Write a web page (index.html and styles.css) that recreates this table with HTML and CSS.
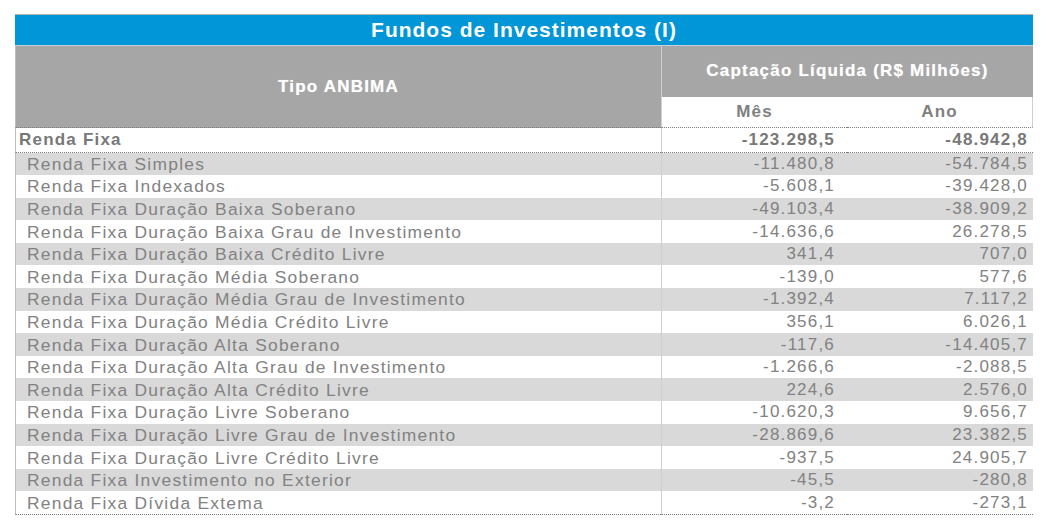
FILE: index.html
```html
<!DOCTYPE html>
<html lang="pt-BR">
<head>
<meta charset="utf-8">
<title>Fundos de Investimentos (I)</title>
<link rel="stylesheet" href="styles.css">
</head>
<body>
<table class="fundos">
  <colgroup>
    <col class="c-tipo">
    <col class="c-val">
    <col class="c-val">
  </colgroup>
  <thead>
    <tr class="r-title"><th colspan="3">Fundos de Investimentos (I)</th></tr>
    <tr class="r-h1">
      <th rowspan="2" class="h-tipo">Tipo ANBIMA</th>
      <th colspan="2" class="h-capt">Captação Líquida (R$ Milhões)</th>
    </tr>
    <tr class="r-h2">
      <th class="h-mes">Mês</th>
      <th class="h-ano">Ano</th>
    </tr>
  </thead>
  <tbody>
    <tr class="r-total"><td class="nome">Renda Fixa</td><td class="mes">-123.298,5</td><td class="ano">-48.942,8</td></tr>
    <tr class="r-item alt"><td class="nome">Renda Fixa Simples</td><td class="mes">-11.480,8</td><td class="ano">-54.784,5</td></tr>
    <tr class="r-item"><td class="nome">Renda Fixa Indexados</td><td class="mes">-5.608,1</td><td class="ano">-39.428,0</td></tr>
    <tr class="r-item alt"><td class="nome">Renda Fixa Duração Baixa Soberano</td><td class="mes">-49.103,4</td><td class="ano">-38.909,2</td></tr>
    <tr class="r-item"><td class="nome">Renda Fixa Duração Baixa Grau de Investimento</td><td class="mes">-14.636,6</td><td class="ano">26.278,5</td></tr>
    <tr class="r-item alt"><td class="nome">Renda Fixa Duração Baixa Crédito Livre</td><td class="mes">341,4</td><td class="ano">707,0</td></tr>
    <tr class="r-item"><td class="nome">Renda Fixa Duração Média Soberano</td><td class="mes">-139,0</td><td class="ano">577,6</td></tr>
    <tr class="r-item alt"><td class="nome">Renda Fixa Duração Média Grau de Investimento</td><td class="mes">-1.392,4</td><td class="ano">7.117,2</td></tr>
    <tr class="r-item"><td class="nome">Renda Fixa Duração Média Crédito Livre</td><td class="mes">356,1</td><td class="ano">6.026,1</td></tr>
    <tr class="r-item alt"><td class="nome">Renda Fixa Duração Alta Soberano</td><td class="mes">-117,6</td><td class="ano">-14.405,7</td></tr>
    <tr class="r-item"><td class="nome">Renda Fixa Duração Alta Grau de Investimento</td><td class="mes">-1.266,6</td><td class="ano">-2.088,5</td></tr>
    <tr class="r-item alt"><td class="nome">Renda Fixa Duração Alta Crédito Livre</td><td class="mes">224,6</td><td class="ano">2.576,0</td></tr>
    <tr class="r-item"><td class="nome">Renda Fixa Duração Livre Soberano</td><td class="mes">-10.620,3</td><td class="ano">9.656,7</td></tr>
    <tr class="r-item alt"><td class="nome">Renda Fixa Duração Livre Grau de Investimento</td><td class="mes">-28.869,6</td><td class="ano">23.382,5</td></tr>
    <tr class="r-item"><td class="nome">Renda Fixa Duração Livre Crédito Livre</td><td class="mes">-937,5</td><td class="ano">24.905,7</td></tr>
    <tr class="r-item alt"><td class="nome">Renda Fixa Investimento no Exterior</td><td class="mes">-45,5</td><td class="ano">-280,8</td></tr>
    <tr class="r-item last"><td class="nome">Renda Fixa Dívida Extema</td><td class="mes">-3,2</td><td class="ano">-273,1</td></tr>
  </tbody>
</table>
</body>
</html>
```

FILE: styles.css
```css
html, body {
  margin: 0;
  padding: 0;
  background: #ffffff;
}

body {
  padding: 14px 0 0 15px;
  font-family: "Liberation Sans", Arial, sans-serif;
  font-size: 17px;
  letter-spacing: 1.2px;
  color: #808080;
}

.fundos {
  border-collapse: separate;
  border-spacing: 0;
  table-layout: fixed;
  width: 1018px;
}

.c-tipo { width: 646px; }
.c-val { width: 186px; }

.fundos th,
.fundos td {
  padding: 0;
  white-space: nowrap;
  line-height: 20px;
}

/* Title bar */
.r-title th {
  height: 30px;
  background: #0096d8;
  color: #ffffff;
  font-size: 21px;
  letter-spacing: 1px;
  font-weight: bold;
  text-align: center;
  border-top: 1px solid #b4b4b4;
  border-bottom: 1px solid #c4cfd6;
}

/* Header */
.h-tipo {
  background: #a6a6a6;
  color: #ffffff;
  font-weight: bold;
  text-align: center;
  border-left: 1px solid #bdbdbd;
  border-bottom: 1px dotted #7a7a7a;
  text-shadow: 0 0 1px rgba(255,255,255,0.6);
}

.r-h1 th.h-capt {
  height: 50px;
  background: #a6a6a6;
  color: #ffffff;
  font-weight: bold;
  text-align: center;
  border-left: 1px solid #cfcfcf;
  padding-bottom: 1px;
  text-shadow: 0 0 1px rgba(255,255,255,0.6);
}

.r-h2 th {
  height: 30px;
  background: #ffffff;
  color: #808080;
  font-weight: bold;
  text-align: center;
  border-bottom: 1px dotted #7a7a7a;
  vertical-align: middle;
}

.h-mes { border-left: 1px solid #cfcfcf; }
.h-ano { border-right: 1px solid #cfcfcf; }

/* Body rows */
.fundos td.nome { border-left: 1px solid #bdbdbd; }
.fundos td.mes { border-left: 1px solid #cfcfcf; text-align: right; padding-right: 12px; }
.fundos td.ano { text-align: right; padding-right: 5px; }

.r-total td {
  height: 23.5px;
  font-weight: bold;
  color: #787878;
  border-bottom: 1px dotted #7a7a7a;
}
.r-total td.nome { padding-left: 3px; }

.r-item td {
  height: 22.6px;
  font-size: 17px;
  letter-spacing: 1.2px;
  color: #828282;
}
.r-item td.nome {
  padding-left: 11px;
  font-size: 17.4px;
  letter-spacing: 1.25px;
}

.r-item.alt td { background: #d9d9d9; }

.r-item.last td { border-bottom: 1px dotted #7a7a7a; }
```
